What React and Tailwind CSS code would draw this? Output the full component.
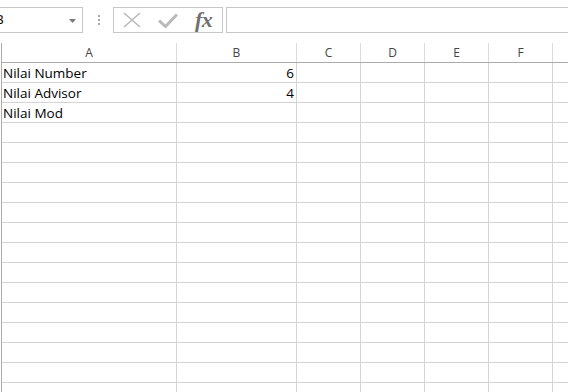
import React from 'react';

const COLS = [
  { id: 'A', w: 'w-[175px]' },
  { id: 'B', w: 'w-[120px]' },
  { id: 'C', w: 'w-[64px]' },
  { id: 'D', w: 'w-[64px]' },
  { id: 'E', w: 'w-[64px]' },
  { id: 'F', w: 'w-[64px]' },
  { id: '', w: 'w-[64px]' },
];

const DATA = [
  ['Nilai Number', '6'],
  ['Nilai Advisor', '4'],
  ['Nilai Mod', ''],
];

const App = () => {
  const rows = [...Array(17)].map((_, i) => DATA[i] || ['', '']);

  return (
    <div className="w-[568px] h-[392px] overflow-hidden bg-white font-['Open_Sans',sans-serif] text-black select-none">
      {/* Formula bar */}
      <div className="flex items-start h-[43px] pt-[7px]">
        <div className="-ml-[31px] w-[114px] h-[26px] border border-[#c6c6c6] flex items-center pl-[25px] pr-[6px] shrink-0">
          <span className="text-[13.5px] leading-none flex-1">B</span>
          <svg width="7" height="4" viewBox="0 0 7 4" className="mt-[1px]">
            <path d="M0 0 H7 L3.5 4 Z" fill="#7a7a7a" />
          </svg>
        </div>
        <div className="ml-[14px] w-[3px] h-[26px] flex flex-col items-center justify-center gap-[2px] shrink-0">
          {[0, 1, 2].map(i => <span key={i} className="w-[2px] h-[2px] bg-[#a8a8a8]" />)}
        </div>
        <div className="ml-[13px] w-[110px] h-[26px] border border-[#c6c6c6] flex items-center shrink-0">
          <svg width="18" height="16" viewBox="0 0 18 16" className="ml-[9px]">
            <path d="M1 1 L17 15 M17 1 L1 15" stroke="#b9b9b9" strokeWidth="1.6" />
          </svg>
          <svg width="20" height="15" viewBox="0 0 20 15" className="ml-[17px]">
            <path d="M1 7.5 L7.5 13.5 L19 1.5" stroke="#b9b9b9" strokeWidth="3" fill="none" />
          </svg>
          <span className="ml-[17px] font-['Liberation_Serif',serif] italic font-bold text-[22px] leading-none text-[#707070] tracking-[-0.5px]">fx</span>
        </div>
        <div className="ml-[3px] flex-1 -mr-[10px] h-[26px] border border-[#c6c6c6]" />
      </div>

      {/* Grid */}
      <div className="flex">
        <div className="w-[2px] h-[360px] border-r border-[#ababab] shrink-0" />
        <div className="flex-1">
          <div className="flex h-[20px] border-b border-[#ababab]">
            {COLS.map((c, i) => (
              <div key={i} className={`${c.w} shrink-0 h-full border-r border-[#dcdcdc] text-center text-[12px] leading-[19px] text-[#444]`}>
                {c.id}
              </div>
            ))}
          </div>
          {rows.map((r, ri) => (
            <div key={ri} className="flex h-[20px] border-b border-[#d4d4d4]">
              {COLS.map((c, ci) => (
                <div key={ci} className={`${c.w} shrink-0 h-full border-r border-[#d4d4d4] text-[13.5px] leading-[20px] overflow-hidden whitespace-nowrap ${ci === 1 ? 'text-right pr-[2px]' : 'pl-[1px]'}`}>
                  {ci < 2 ? r[ci] : ''}
                </div>
              ))}
            </div>
          ))}
        </div>
      </div>
    </div>
  );
};

export default App;
